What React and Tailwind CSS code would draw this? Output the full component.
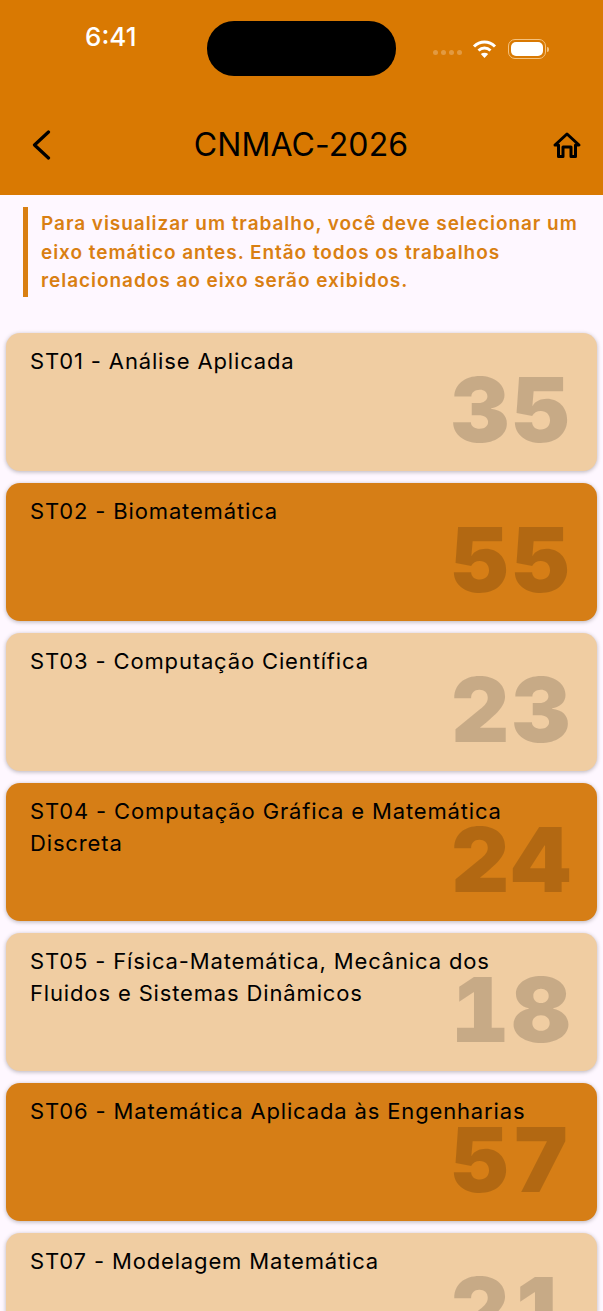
const eixos = [
  { title: "ST01 - Análise Aplicada", total: 35 },
  { title: "ST02 - Biomatemática", total: 55 },
  { title: "ST03 - Computação Científica", total: 23 },
  { title: "ST04 - Computação Gráfica e Matemática Discreta", total: 24 },
  { title: "ST05 - Física-Matemática, Mecânica dos Fluidos e Sistemas Dinâmicos", total: 18 },
  { title: "ST06 - Matemática Aplicada às Engenharias", total: 57 },
  { title: "ST07 - Modelagem Matemática", total: 21 },
];

function StatusBar() {
  return (
    <div className="flex items-start h-[96px] pt-[21px] pl-[85px]">
      <span className="w-[122px] text-[26px] leading-[32px] font-medium text-white">6:41</span>
      <div className="w-[189px] h-[55px] bg-black rounded-[27px]" />
      <div className="flex items-center ml-[37px] mt-[18px] h-[20px]">
        <div className="flex gap-[3px] mt-[6px]">
          <span className="w-[5px] h-[5px] rounded-full bg-white/25" />
          <span className="w-[5px] h-[5px] rounded-full bg-white/25" />
          <span className="w-[5px] h-[5px] rounded-full bg-white/25" />
          <span className="w-[5px] h-[5px] rounded-full bg-white/25" />
        </div>
        <svg className="ml-[10px]" width="25" height="20" viewBox="0 0 25 20" fill="none" stroke="white" strokeWidth="3">
          <path d="M2 7.5C8 1.5 17 1.5 23 7.5" />
          <path d="M6.5 11.5C10 8.3 15 8.3 18.5 11.5" />
          <path d="M12.5 19L8.8 15C11 13.2 14 13.2 16.2 15Z" fill="white" stroke="none" />
        </svg>
        <div className="ml-[11px] w-[38px] h-[20px] rounded-[7px] border border-[#f5c27e] p-[2px]">
          <div className="w-full h-full rounded-[5px] bg-white" />
        </div>
        <div className="ml-[1px] w-[2px] h-[5px] rounded-r-full bg-[#f5c27e]" />
      </div>
    </div>
  );
}

function TopBar() {
  return (
    <div className="flex items-center justify-between h-[99px] pl-[31px] pr-[21px] pb-[2px]">
      <svg width="21" height="30" viewBox="0 0 21 30" fill="none" stroke="black" strokeWidth="3.2" strokeLinecap="round" strokeLinejoin="round">
        <path d="M17.5 2L3.5 15L17.5 28" />
      </svg>
      <h1 className="-ml-[2px] text-[32px] leading-[40px] font-normal text-black tracking-[0.1px]">CNMAC-2026</h1>
      <svg width="30" height="28" viewBox="0 0 30 28" fill="none" stroke="black" strokeWidth="3" strokeLinejoin="round">
        <path d="M3 14L15 3L27 14H23.5V25.5H19V16H11V25.5H6.5V14Z" />
      </svg>
    </div>
  );
}

function EixoCard({ title, total, dark }) {
  return (
    <div className={`relative h-[138px] shrink-0 rounded-[14px] px-[24px] py-[12px] shadow-[0_1px_4px_rgba(0,0,0,0.28)] ${dark ? "bg-[#d67e16]" : "bg-[#f0cda2]"}`}>
      <p className="relative max-w-[510px] text-[22px] leading-[32px] text-black tracking-[0.85px]">{title}</p>
      <span className="absolute right-[24px] top-[25px] font-black tabular-nums text-[90px] leading-[104px] tracking-[3px] text-black/[0.17]">{total}</span>
    </div>
  );
}

export default function App() {
  return (
    <div className="h-[1311px] overflow-hidden bg-[#fef7ff] font-['Inter',sans-serif]">
      <div className="bg-[#d97902]">
        <StatusBar />
        <TopBar />
      </div>
      <div className="ml-[23px] mt-[12px] mr-[20px] border-l-[5px] border-[#d97f12] pl-[13px]">
        <p className="text-[19px] leading-[28.5px] font-semibold text-[#d97f12] tracking-[0.95px] pt-[3px] pb-[1px]">
          Para visualizar um trabalho, você deve selecionar um eixo temático antes. Então todos os trabalhos relacionados ao eixo serão exibidos.
        </p>
      </div>
      <div className="mt-[36px] px-[6px] flex flex-col gap-[12px]">
        {eixos.map((eixo, i) => (
          <EixoCard key={eixo.title} title={eixo.title} total={eixo.total} dark={i % 2 === 1} />
        ))}
      </div>
    </div>
  );
}
